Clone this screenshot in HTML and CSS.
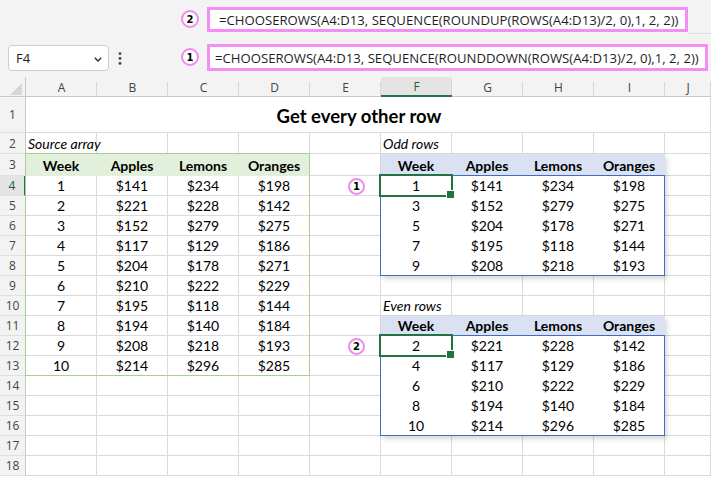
FILE: index.html
```html
<!DOCTYPE html>
<html>
<head>
<meta charset="utf-8">
<link rel="stylesheet" href="styles.css">
</head>
<body>
<div class="app">
  <div class="toolbar">
    <div class="fxrow top">
      <span class="badge b2">2</span>
      <div class="fx fx-up">=CHOOSEROWS(A4:D13, SEQUENCE(ROUNDUP(ROWS(A4:D13)/2, 0),1, 2, 2))</div>
      <div class="fx-rest"></div>
    </div>
    <div class="fxrow bottom">
      <div class="namebox"><span>F4</span><svg class="chev" width="8" height="5" viewBox="0 0 8 5"><path d="M0.8 0.8 L4 4 L7.2 0.8" fill="none" stroke="#333" stroke-width="1.5"/></svg></div>
      <svg class="dots" width="4" height="13" viewBox="0 0 4 13"><circle cx="2" cy="1.6" r="1.4"/><circle cx="2" cy="6.5" r="1.4"/><circle cx="2" cy="11.4" r="1.4"/></svg>
      <span class="badge b1">1</span>
      <div class="fx fx-down">=CHOOSEROWS(A4:D13, SEQUENCE(ROUNDDOWN(ROWS(A4:D13)/2, 0),1, 2, 2))</div>
    </div>
  </div>
  <div class="sheet">
    <div class="cells">
      <div class="corner"><span class="tri"></span></div>
      <div class="ch">A</div><div class="ch">B</div><div class="ch">C</div><div class="ch">D</div><div class="ch">E</div><div class="ch sel">F</div><div class="ch">G</div><div class="ch">H</div><div class="ch">I</div><div class="ch">J</div>

      <div class="rh">1</div><div class="c title">Get every other row</div>

      <div class="rh">2</div><div class="c lbl">Source array</div><div class="c"></div><div class="c"></div><div class="c"></div><div class="c"></div><div class="c lbl">Odd rows</div><div class="c"></div><div class="c"></div><div class="c"></div><div class="c"></div>

      <div class="rh">3</div><div class="c gh">Week</div><div class="c gh">Apples</div><div class="c gh">Lemons</div><div class="c gh">Oranges</div><div class="c"></div><div class="c bh">Week</div><div class="c bh">Apples</div><div class="c bh">Lemons</div><div class="c bh">Oranges</div><div class="c"></div>

      <div class="rh sel">4</div><div class="c">1</div><div class="c">$141</div><div class="c">$234</div><div class="c">$198</div><div class="c"></div><div class="c w">1</div><div class="c w">$141</div><div class="c w">$234</div><div class="c w">$198</div><div class="c"></div>

      <div class="rh">5</div><div class="c">2</div><div class="c">$221</div><div class="c">$228</div><div class="c">$142</div><div class="c"></div><div class="c w">3</div><div class="c w">$152</div><div class="c w">$279</div><div class="c w">$275</div><div class="c"></div>

      <div class="rh">6</div><div class="c">3</div><div class="c">$152</div><div class="c">$279</div><div class="c">$275</div><div class="c"></div><div class="c w">5</div><div class="c w">$204</div><div class="c w">$178</div><div class="c w">$271</div><div class="c"></div>

      <div class="rh">7</div><div class="c">4</div><div class="c">$117</div><div class="c">$129</div><div class="c">$186</div><div class="c"></div><div class="c w">7</div><div class="c w">$195</div><div class="c w">$118</div><div class="c w">$144</div><div class="c"></div>

      <div class="rh">8</div><div class="c">5</div><div class="c">$204</div><div class="c">$178</div><div class="c">$271</div><div class="c"></div><div class="c w">9</div><div class="c w">$208</div><div class="c w">$218</div><div class="c w">$193</div><div class="c"></div>

      <div class="rh">9</div><div class="c">6</div><div class="c">$210</div><div class="c">$222</div><div class="c">$229</div><div class="c"></div><div class="c"></div><div class="c"></div><div class="c"></div><div class="c"></div><div class="c"></div>

      <div class="rh">10</div><div class="c">7</div><div class="c">$195</div><div class="c">$118</div><div class="c">$144</div><div class="c"></div><div class="c lbl">Even rows</div><div class="c"></div><div class="c"></div><div class="c"></div><div class="c"></div>

      <div class="rh">11</div><div class="c">8</div><div class="c">$194</div><div class="c">$140</div><div class="c">$184</div><div class="c"></div><div class="c bh">Week</div><div class="c bh">Apples</div><div class="c bh">Lemons</div><div class="c bh">Oranges</div><div class="c"></div>

      <div class="rh">12</div><div class="c">9</div><div class="c">$208</div><div class="c">$218</div><div class="c">$193</div><div class="c"></div><div class="c w">2</div><div class="c w">$221</div><div class="c w">$228</div><div class="c w">$142</div><div class="c"></div>

      <div class="rh">13</div><div class="c">10</div><div class="c">$214</div><div class="c">$296</div><div class="c">$285</div><div class="c"></div><div class="c w">4</div><div class="c w">$117</div><div class="c w">$129</div><div class="c w">$186</div><div class="c"></div>

      <div class="rh">14</div><div class="c"></div><div class="c"></div><div class="c"></div><div class="c"></div><div class="c"></div><div class="c w">6</div><div class="c w">$210</div><div class="c w">$222</div><div class="c w">$229</div><div class="c"></div>

      <div class="rh">15</div><div class="c"></div><div class="c"></div><div class="c"></div><div class="c"></div><div class="c"></div><div class="c w">8</div><div class="c w">$194</div><div class="c w">$140</div><div class="c w">$184</div><div class="c"></div>

      <div class="rh">16</div><div class="c"></div><div class="c"></div><div class="c"></div><div class="c"></div><div class="c"></div><div class="c w">10</div><div class="c w">$214</div><div class="c w">$296</div><div class="c w">$285</div><div class="c"></div>

      <div class="rh">17</div><div class="c"></div><div class="c"></div><div class="c"></div><div class="c"></div><div class="c"></div><div class="c"></div><div class="c"></div><div class="c"></div><div class="c"></div><div class="c"></div>

      <div class="rh">18</div><div class="c"></div><div class="c"></div><div class="c"></div><div class="c"></div><div class="c"></div><div class="c"></div><div class="c"></div><div class="c"></div><div class="c"></div><div class="c"></div>
    </div>
    <div class="over">
      <div class="shd shd1"></div>
      <div class="shd shd2"></div>
      <div class="rng rng-g"></div>
      <div class="rng rng-b rng-b1"></div>
      <div class="rng rng-b rng-b2"></div>
      <div class="act act1"></div>
      <div class="act act2"></div>
      <span class="badge sb sb1">1</span>
      <span class="badge sb sb2">2</span>
    </div>
  </div>
</div>
</body>
</html>
```

FILE: styles.css
```css
* { box-sizing: border-box; }
html, body { margin: 0; padding: 0; }
body {
  width: 711px;
  height: 477px;
  overflow: hidden;
  background: #fff;
  font-family: "Lato", "Liberation Sans", sans-serif;
}

/* ---------- formula bar area ---------- */
.toolbar {
  height: 77px;
  background: #f3f3f3;
  display: flex;
  flex-direction: column;
}
.fxrow { display: flex; align-items: flex-start; }
.fxrow.top { height: 38px; }
.fxrow.bottom { height: 39px; }

.badge {
  display: flex;
  align-items: center;
  justify-content: center;
  width: 18px;
  height: 18px;
  border: 2px solid #f08af0;
  border-radius: 50%;
  background: #fff;
  font: bold 10px "DejaVu Sans", sans-serif;
  color: #000;
  flex: none;
}
.b2 { margin: 10px 0 0 181px; }
.b1 { margin: 10px 0 0 59px; }

.fx {
  background: #fff;
  border: 3px solid #f48ef4;
  font-family: "Open Sans", sans-serif;
  font-size: 13.15px;
  color: #1e1e1e;
  white-space: nowrap;
  overflow: hidden;
  display: flex;
  align-items: center;
  flex: none;
}
.fx-up { margin: 7px 0 0 8px; width: 481px; height: 25px; padding-left: 9px; }
.fx-down { margin: 6px 0 0 8px; width: 501px; height: 27px; padding-left: 5px; }
.fx-rest { flex: 1; height: 34px; border-bottom: 1px solid #dcdcdc; }

.namebox {
  margin: 7px 0 0 8px;
  width: 101px;
  height: 26px;
  border: 1px solid #cdcdcd;
  border-radius: 4px;
  background: #fff;
  display: flex;
  align-items: center;
  justify-content: space-between;
  padding: 0 6px 0 7px;
  font: 13px "Open Sans", sans-serif;
  color: #222;
  flex: none;
}
.chev { margin-top: 3px; }
.dots { margin: 14px 0 0 9px; fill: #444; flex: none; }

/* ---------- sheet ---------- */
.sheet { display: grid; }
.cells, .over {
  grid-area: 1 / 1;
  display: grid;
  grid-template-columns: 26px repeat(9, 71px) 46px;
  grid-template-rows: 20px 36px 21px 22px repeat(15, 20px);
}
.over { pointer-events: none; }

.corner {
  background: #f3f3f3;
  border-right: 1px solid #c8c8c8;
  border-bottom: 1px solid #c8c8c8;
  position: relative;
}
.tri {
  display: block;
  width: 12px;
  height: 12px;
  margin: 6px 0 0 10px;
  background: #d6d6d6;
  clip-path: polygon(100% 0, 100% 100%, 0 100%);
}

.ch {
  background: linear-gradient(#d6d6d6, #d6d6d6) right bottom / 1px 14px no-repeat #f3f3f3;
  border-bottom: 1px solid #c8c8c8;
  display: flex;
  align-items: center;
  justify-content: center;
  font: 12px "Open Sans", sans-serif;
  color: #444;
  padding-top: 1px;
}
.ch.sel {
  background-color: #e4e4e4;
  border-bottom: 2px solid #217346;
  color: #1f5f3a;
}

.rh {
  background: #f3f3f3;
  border-right: 1px solid #c8c8c8;
  border-bottom: 1px solid #e0e0e0;
  display: flex;
  align-items: center;
  justify-content: center;
  font: 12px "Open Sans", sans-serif;
  color: #444;
}
.rh.sel {
  background: #e4e4e4;
  border-right: 2px solid #217346;
  color: #1f5f3a;
}

.c {
  border-right: 1px solid #dadada;
  border-bottom: 1px solid #dadada;
  display: flex;
  align-items: flex-end;
  justify-content: center;
  line-height: 19px;
  font-size: 14px;
  color: #000;
  white-space: nowrap;
}
.title {
  grid-column: span 10;
  align-items: center;
  font-weight: bold;
  font-size: 18.5px;
  line-height: 22px;
  padding-right: 18px;
  padding-top: 2px;
}
.lbl { justify-content: flex-start; padding-left: 2px; font-style: italic; }
.gh { background: #e2efda; border-color: #e2efda; font-weight: bold; }
.bh { background: #d9e1f2; border-color: #d9e1f2; font-weight: bold; }
.w { border-color: #fff; }

/* ---------- overlays ---------- */
.shd { box-shadow: 2px 3px 5px rgba(0, 0, 0, 0.16); }
.shd1 { grid-area: 4 / 7 / 10 / 11; }
.shd2 { grid-area: 12 / 7 / 18 / 11; }

.rng { margin: -1px 0 0 -1px; border: 1px solid; }
.rng-g { grid-area: 4 / 2 / 15 / 6; border-color: #a9d08e; }
.rng-b { border-color: #3b6fcb; }
.rng-b1 { grid-area: 5 / 7 / 10 / 11; }
.rng-b2 { grid-area: 13 / 7 / 18 / 11; }

.act {
  position: relative;
  margin: -2px -1px -1px -2px;
  border: 2px solid #217346;
}
.act::after {
  content: "";
  position: absolute;
  right: -4px;
  bottom: -4px;
  width: 7px;
  height: 7px;
  background: #217346;
  border: 1px solid #fff;
}
.act1 { grid-area: 5 / 7 / 6 / 8; }
.act2 { grid-area: 13 / 7 / 14 / 8; }

.sb {
  align-self: center;
  justify-self: end;
  margin-right: 16px;
  width: 17px;
  height: 17px;
}
.sb1 { grid-area: 5 / 6; }
.sb2 { grid-area: 13 / 6; }
```
